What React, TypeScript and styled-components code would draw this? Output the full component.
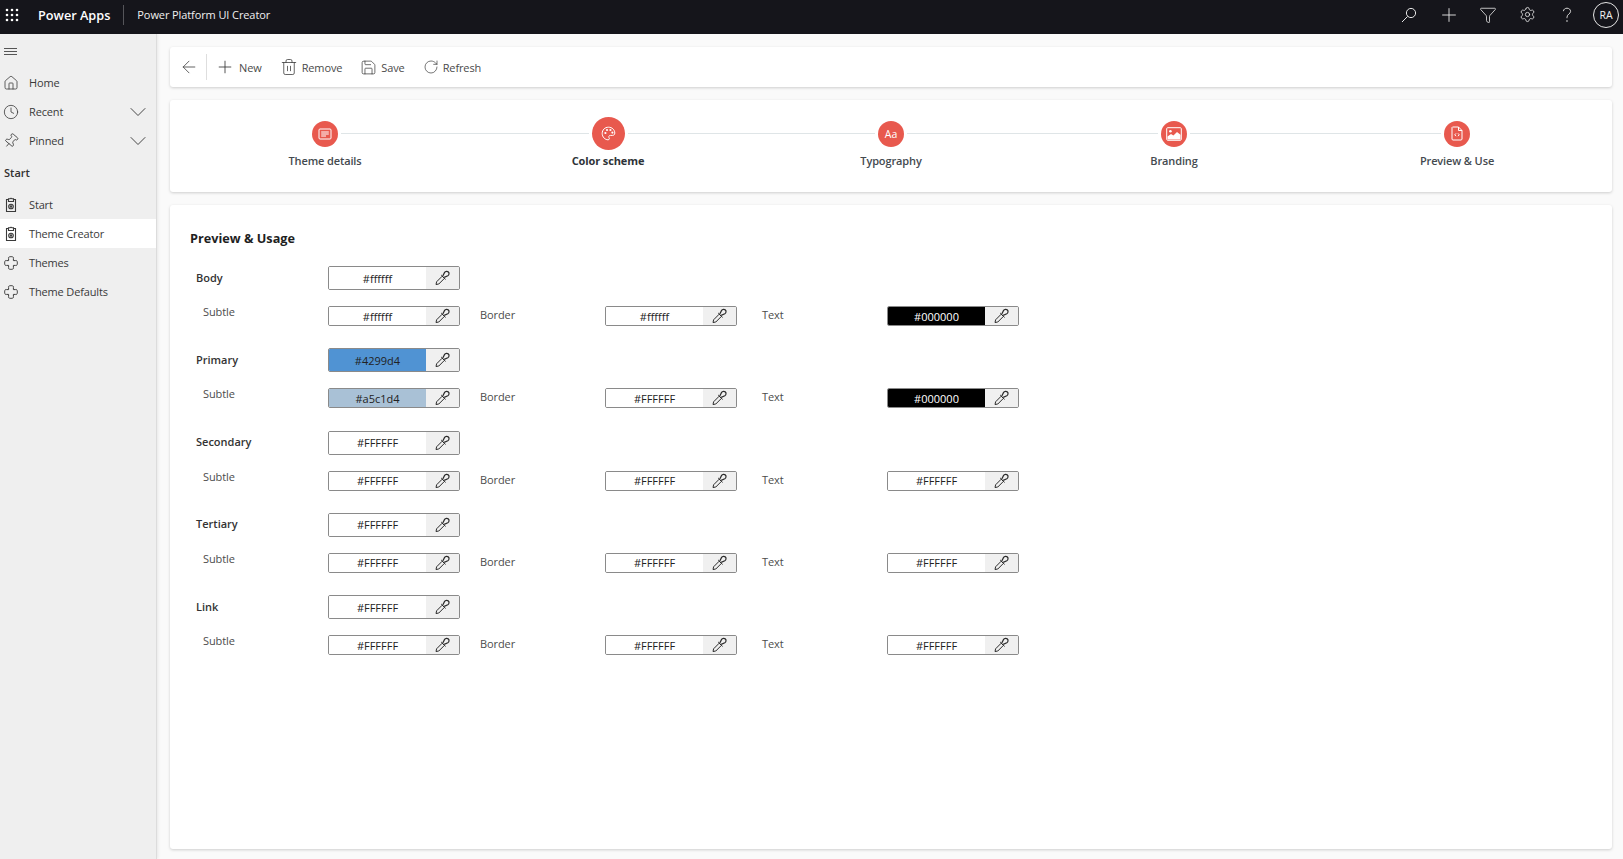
import React, { ReactNode } from 'react';
import styled, { createGlobalStyle } from 'styled-components';
import { ArrowLeft, ChevronDown, Clock, Funnel, House, Pin, Plus, RotateCw, Save, Settings, Trash2 } from 'lucide-react';

const GlobalStyle = createGlobalStyle`
  html, body {
    margin: 0;
    padding: 0;
    height: 100%;
    background: #fafafa;
    font-family: "Open Sans", "Noto Sans", sans-serif;
    color: #323130;
  }
  * { box-sizing: border-box; }
`;

interface Swatch {
  value: string;
  bg?: string;
  fg?: string;
}

interface ColorGroup {
  name: string;
  main: Swatch;
  subtle: Swatch;
  border: Swatch;
  text: Swatch;
}

const W: Swatch = { value: '#FFFFFF' };
const w: Swatch = { value: '#ffffff' };
const K: Swatch = { value: '#000000', bg: '#000000', fg: '#ffffff' };

const groups: ColorGroup[] = [
  { name: 'Body', main: w, subtle: w, border: w, text: K },
  {
    name: 'Primary',
    main: { value: '#4299d4', bg: '#5093d3' },
    subtle: { value: '#a5c1d4', bg: '#a9c1d6' },
    border: W,
    text: K
  },
  { name: 'Secondary', main: W, subtle: W, border: W, text: W },
  { name: 'Tertiary', main: W, subtle: W, border: W, text: W },
  { name: 'Link', main: W, subtle: W, border: W, text: W }
];

function Waffle() {
  const dots = [3, 8, 13];
  return (
    <svg width="16" height="16" viewBox="0 0 16 16" fill="#fff">
      {dots.map(y => dots.map(x => <circle key={`${x}-${y}`} cx={x} cy={y} r="1.3" />))}
    </svg>
  );
}

function Dropper() {
  return (
    <svg width="18" height="18" viewBox="0 0 18 18" fill="none" stroke="#2b2b2b" strokeWidth="1">
      <path d="M3 15.5 L3.6 12.8 L9.2 7.2 L11.4 9.4 L5.8 15 Z" />
      <path d="M8.2 6 L12.6 10.4" />
      <path strokeWidth="1.2" d="M9.8 7 L11.6 3.4 C12.4 2 14.4 2 15.4 3 C16.4 4 16.2 6 14.8 6.8 L11.2 8.4" />
    </svg>
  );
}

function ClipIcon() {
  return (
    <svg width="16" height="16" viewBox="0 0 16 16" fill="none" stroke="#3a3a3a" strokeWidth="1.1">
      <path d="M5.5 2.5 H3.5 V14.5 H12.5 V2.5 H10.5" />
      <path d="M5.5 4.5 V1.8 H7 C7.2 1 8.8 1 9 1.8 H10.5 V4.5 Z" />
      <circle cx="8" cy="9.5" r="2.3" />
      <circle cx="8" cy="9.5" r=".7" />
    </svg>
  );
}

function PuzzleIcon() {
  return (
    <svg width="16" height="16" viewBox="0 0 16 16" fill="none" stroke="#3a3a3a" strokeWidth="1">
      <path d="M5.6 5.6 V3.6 C4 1 12 1 10.4 3.6 V5.6 H12.4 C15 4 15 12 12.4 10.4 H10.4 V12.4 C12 15 4 15 5.6 12.4 V10.4 H3.6 C1 12 1 4 3.6 5.6 Z" />
    </svg>
  );
}

function SearchGlyph() {
  return (
    <svg width="16" height="16" viewBox="0 0 16 16" fill="none" stroke="#e6e6e6" strokeWidth="1">
      <circle cx="10" cy="6" r="4.6" />
      <path d="M6.6 9.4 L1 15" />
    </svg>
  );
}

function HelpGlyph() {
  return (
    <svg width="14" height="16" viewBox="0 0 14 16" fill="none" stroke="#d6d6d6" strokeWidth="1">
      <path d="M3.4 4.2 C3.6 2.2 5.2 1.2 7 1.2 C9 1.2 10.6 2.6 10.6 4.4 C10.6 6.8 7 7.2 7 10.2 V11.2" />
      <circle cx="7" cy="14" r=".4" />
    </svg>
  );
}

function DetailsIcon() {
  return (
    <svg width="14" height="14" viewBox="0 0 14 14" fill="none" stroke="#fff" strokeWidth="1">
      <rect x="1" y="2" width="12" height="10" rx="1" />
      <path d="M3.2 5 H10.8 M3.2 7 H10.8 M3.2 9 H8" />
    </svg>
  );
}

function PaletteIcon() {
  return (
    <svg width="15" height="15" viewBox="0 0 15 15" fill="none" stroke="#fff" strokeWidth="1">
      <path d="M7.5 1.2 C3.8 1.2 1.2 4 1.2 7.4 C1.2 11 4 13.8 7 13.8 C8.6 13.8 8.6 12.4 8 11.6 C7.4 10.6 8 9.4 9.4 9.4 H11.6 C13 9.4 13.8 8.4 13.8 7 C13.8 3.8 11 1.2 7.5 1.2 Z" />
      <g fill="#fff" stroke="none">
        <circle cx="4.4" cy="7" r="1.1" />
        <circle cx="6" cy="4" r="1.1" />
        <circle cx="9.4" cy="4" r="1.1" />
        <circle cx="11.4" cy="6.6" r="1.1" />
      </g>
    </svg>
  );
}

function ImageIcon() {
  return (
    <svg width="16" height="14" viewBox="0 0 16 14" fill="none">
      <rect x=".7" y=".7" width="14.6" height="12.6" rx="1" stroke="#fff" />
      <circle cx="4.4" cy="4.2" r="1.3" fill="#fff" />
      <path d="M1.5 12.5 V9.6 L5 7 L7.4 8.6 L11 5 L14.5 7.8 V12.5 Z" fill="#fff" />
    </svg>
  );
}

function FileIcon() {
  return (
    <svg width="14" height="15" viewBox="0 0 14 15" fill="none" stroke="#fff" strokeWidth="1">
      <path d="M2.5 1 H8.5 L12 4.5 V13 C12 13.6 11.6 14 11 14 H3 C2.4 14 2 13.6 2 13 V1.5 Z" />
      <path d="M8.5 1 V4.5 H12" />
      <path d="M6 7.4 L4.8 8.8 L6 10.2 M8 7.4 L9.2 8.8 L8 10.2" />
    </svg>
  );
}

function Field({ swatch }: { swatch: Swatch }) {
  return (
    <FieldBox>
      <FieldValue $bg={swatch.bg} $fg={swatch.fg}>{swatch.value}</FieldValue>
      <DropperButton><Dropper /></DropperButton>
    </FieldBox>
  );
}

export default function App() {
  const steps: { label: string; icon: ReactNode; active?: boolean }[] = [
    { label: 'Theme details', icon: <DetailsIcon /> },
    { label: 'Color scheme', icon: <PaletteIcon />, active: true },
    { label: 'Typography', icon: <AaText>Aa</AaText> },
    { label: 'Branding', icon: <ImageIcon /> },
    { label: 'Preview & Use', icon: <FileIcon /> }
  ];

  return (
    <Page>
      <GlobalStyle />
      <TopBar>
        <WaffleSlot><Waffle /></WaffleSlot>
        <AppName>Power Apps</AppName>
        <EnvName>Power Platform UI Creator</EnvName>
        <TopActions>
          <TopIcon><SearchGlyph /></TopIcon>
          <TopIcon><Plus size={22} strokeWidth={1} color="#e6e6e6" /></TopIcon>
          <TopIcon><Funnel size={18} strokeWidth={1.1} color="#e6e6e6" /></TopIcon>
          <TopIcon><Settings size={17} strokeWidth={1.2} color="#e6e6e6" /></TopIcon>
          <TopIcon><HelpGlyph /></TopIcon>
          <Avatar>RA</Avatar>
        </TopActions>
      </TopBar>
      <Body>
        <SideNav>
          <Burger />
          <NavItem><House size={16} strokeWidth={1.2} /><span>Home</span></NavItem>
          <NavItem><Clock size={16} strokeWidth={1.2} /><span>Recent</span><NavChevron size={28} strokeWidth={0.8} /></NavItem>
          <NavItem><TiltedPin size={16} strokeWidth={1.2} /><span>Pinned</span><NavChevron size={28} strokeWidth={0.8} /></NavItem>
          <NavHeading>Start</NavHeading>
          <NavItem><ClipIcon /><span>Start</span></NavItem>
          <NavItem $selected><ClipIcon /><span>Theme Creator</span></NavItem>
          <NavItem><PuzzleIcon /><span>Themes</span></NavItem>
          <NavItem><PuzzleIcon /><span>Theme Defaults</span></NavItem>
        </SideNav>
        <Content>
          <Toolbar>
            <BackButton><ArrowLeft size={20} strokeWidth={1} /></BackButton>
            <ToolButton><Plus size={20} strokeWidth={1} />New</ToolButton>
            <ToolButton><Trash2 size={18} strokeWidth={1} />Remove</ToolButton>
            <ToolButton><Save size={17} strokeWidth={1} />Save</ToolButton>
            <ToolButton><RotateCw size={16} strokeWidth={1} />Refresh</ToolButton>
          </Toolbar>
          <Stepper>
            {steps.map((s, i) => (
              <Step key={s.label}>
                <StepTrack>
                  <StepLine $hidden={i === 0} />
                  <StepDot $active={s.active}>{s.icon}</StepDot>
                  <StepLine $hidden={i === steps.length - 1} />
                </StepTrack>
                <StepLabel $active={s.active}>{s.label}</StepLabel>
              </Step>
            ))}
          </Stepper>
          <MainCard>
            <Title>Preview &amp; Usage</Title>
            <Groups>
              {groups.map(g => (
                <Group key={g.name}>
                  <MainRow>
                    <GroupName>{g.name}</GroupName>
                    <Field swatch={g.main} />
                  </MainRow>
                  <SubRow>
                    <SubtleLabel>Subtle</SubtleLabel>
                    <Field swatch={g.subtle} />
                    <SideLabel>Border</SideLabel>
                    <Field swatch={g.border} />
                    <SideLabel $wide>Text</SideLabel>
                    <Field swatch={g.text} />
                  </SubRow>
                </Group>
              ))}
            </Groups>
          </MainCard>
        </Content>
      </Body>
    </Page>
  );
}

const Page = styled.div`
  width: 100vw;
  height: 100vh;
  display: flex;
  flex-direction: column;
  overflow: hidden;
`;

const TopBar = styled.div`
  height: 34px;
  flex: none;
  display: flex;
  align-items: center;
  padding-bottom: 5px;
  background-color: #15151b;
  color: #fff;
`;

const WaffleSlot = styled.div`
  width: 38px;
  padding-left: 4px;
  display: flex;
  align-items: center;
`;

const AppName = styled.div`
  font-size: 12.7px;
  font-weight: 600;
  padding-right: 13px;
  height: 20px;
  line-height: 20px;
  border-right: 1px solid #55555a;
`;

const EnvName = styled.div`
  font-size: 11px;
  letter-spacing: -0.1px;
  padding-left: 13px;
  color: #f0f0f0;
`;

const TopActions = styled.div`
  margin-left: auto;
  display: flex;
  align-items: center;
  padding-right: 4px;
`;

const TopIcon = styled.div`
  width: 39.5px;
  display: flex;
  justify-content: center;
  align-items: center;
`;

const Avatar = styled.div`
  width: 26px;
  height: 26px;
  margin-left: 6px;
  border: 1px solid #e6e6e6;
  border-radius: 50%;
  display: flex;
  align-items: center;
  justify-content: center;
  font-size: 10.5px;
  color: #f0f0f0;
`;

const Body = styled.div`
  flex: 1;
  display: flex;
  min-height: 0;
`;

const SideNav = styled.div`
  width: 157px;
  flex: none;
  padding-top: 10px;
  background-color: #efefef;
  border-right: 1px solid #dcdcdc;
  box-shadow: 1px 0 3px rgba(0, 0, 0, 0.08);
`;

const Burger = styled.div`
  width: 13px;
  height: 7px;
  margin: 4px 0 13px 4px;
  border-top: 1px solid #555;
  border-bottom: 1px solid #555;
  &::after {
    content: '';
    display: block;
    height: 1px;
    margin-top: 2px;
    background: #555;
  }
`;

const NavItem = styled.div<{ $selected?: boolean }>`
  height: 29px;
  display: flex;
  align-items: center;
  gap: 10px;
  padding-left: 3px;
  font-size: 11px;
  letter-spacing: -0.15px;
  color: #3a3a3a;
  background-color: ${p => (p.$selected ? '#ffffff' : 'transparent')};
  & > svg:first-child {
    flex: none;
    width: 16px;
  }
`;

const NavChevron = styled(ChevronDown)`
  margin-left: auto;
  margin-right: 4px;
`;

const TiltedPin = styled(Pin)`
  transform: rotate(40deg);
`;

const NavHeading = styled.div`
  height: 35px;
  display: flex;
  align-items: center;
  padding-left: 4px;
  font-size: 11px;
  font-weight: 600;
  color: #323130;
`;

const Content = styled.div`
  flex: 1;
  min-width: 0;
  display: flex;
  flex-direction: column;
  gap: 13px;
  padding: 13px 11px 10px 13px;
`;

const Card = styled.div`
  background-color: #fff;
  border-radius: 3px;
  box-shadow: 0 1px 3px rgba(0, 0, 0, 0.18);
`;

const Toolbar = styled(Card)`
  height: 40px;
  flex: none;
  display: flex;
  align-items: center;
  padding-left: 9px;
  gap: 18px;
`;

const BackButton = styled.div`
  width: 28px;
  height: 26px;
  margin-right: -10px;
  display: flex;
  align-items: center;
  color: #444;
  border-right: 1px solid #dedede;
`;

const ToolButton = styled.div`
  display: flex;
  align-items: center;
  gap: 4px;
  font-size: 11px;
  letter-spacing: -0.12px;
  color: #4a4a4a;
  & > svg {
    color: #333;
  }
`;

const Stepper = styled(Card)`
  height: 92px;
  flex: none;
  display: grid;
  grid-template-columns: repeat(5, 1fr);
  padding: 17px 13.5px 0;
`;

const Step = styled.div`
  display: flex;
  flex-direction: column;
  align-items: center;
`;

const StepTrack = styled.div`
  width: 100%;
  height: 33px;
  display: flex;
  align-items: center;
`;

const StepLine = styled.div<{ $hidden?: boolean }>`
  flex: 1;
  height: 1px;
  background-color: ${p => (p.$hidden ? 'transparent' : '#dfe5e7')};
`;

const StepDot = styled.div<{ $active?: boolean }>`
  width: ${p => (p.$active ? '33px' : '26px')};
  height: ${p => (p.$active ? '33px' : '26px')};
  margin: 0 3px;
  flex: none;
  border-radius: 50%;
  background-color: #e8594e;
  display: flex;
  align-items: center;
  justify-content: center;
`;

const AaText = styled.span`
  color: #fff;
  font-size: 10.5px;
`;

const StepLabel = styled.div<{ $active?: boolean }>`
  margin-top: 3px;
  font-size: 11px;
  letter-spacing: -0.12px;
  font-weight: ${p => (p.$active ? 700 : 600)};
  color: ${p => (p.$active ? '#2e3338' : '#444a4f')};
`;

const MainCard = styled(Card)`
  flex: 1;
  min-height: 0;
  padding: 24px 20px;
`;

const Title = styled.div`
  height: 18px;
  line-height: 18px;
  font-size: 12.7px;
  font-weight: 700;
  color: #1f1f1f;
`;

const Groups = styled.div`
  margin-top: 19px;
  padding-left: 6px;
  display: flex;
  flex-direction: column;
  gap: 22.3px;
`;

const Group = styled.div`
  display: flex;
  flex-direction: column;
  gap: 16px;
`;

const MainRow = styled.div`
  display: grid;
  grid-template-columns: 132px 132px;
  align-items: center;
  height: 24px;
`;

const SubRow = styled.div`
  display: grid;
  grid-template-columns: 132px 132px 145px 132px 150px 132px;
  align-items: center;
  height: 20px;
`;

const GroupName = styled.div`
  margin-top: -2px;
  font-size: 11px;
  font-weight: 600;
  color: #333;
`;

const SubtleLabel = styled.div`
  align-self: start;
  margin-top: -2px;
  padding-left: 7px;
  font-size: 11px;
  letter-spacing: -0.1px;
  color: #4c4c4c;
`;

const SideLabel = styled.div<{ $wide?: boolean }>`
  padding-left: ${p => (p.$wide ? '25px' : '20px')};
  margin-top: -3px;
  font-size: 11px;
  letter-spacing: -0.1px;
  color: #4c4c4c;
`;

const FieldBox = styled.div`
  height: 100%;
  display: flex;
  overflow: hidden;
  border: 1px solid #8a8a8a;
  border-radius: 2px;
`;

const FieldValue = styled.div<{ $bg?: string; $fg?: string }>`
  width: 97px;
  display: flex;
  align-items: center;
  justify-content: center;
  font-size: 11px;
  background-color: ${p => p.$bg ?? '#fff'};
  color: ${p => p.$fg ?? '#222'};
`;

const DropperButton = styled.div`
  flex: 1;
  display: flex;
  align-items: center;
  justify-content: center;
  padding-right: 1px;
  background-color: #f0f0f0;
`;
